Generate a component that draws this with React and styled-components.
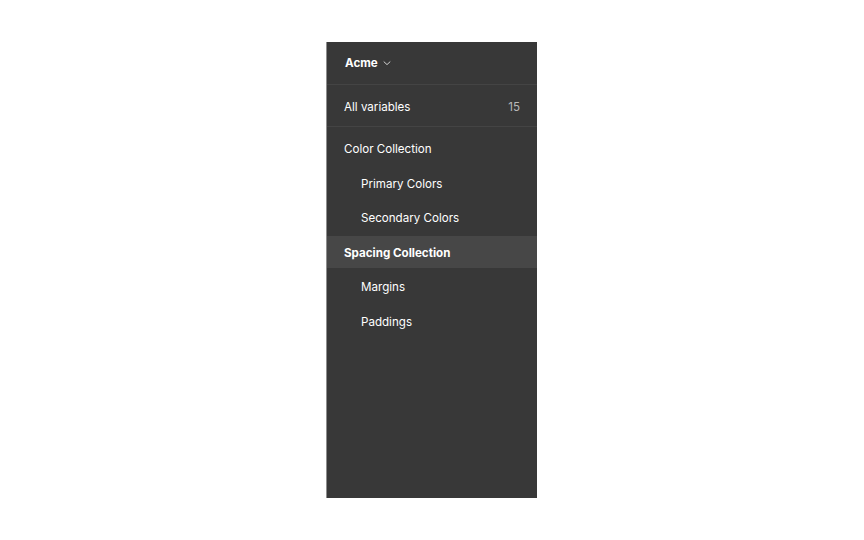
import React from 'react';
import styled, { createGlobalStyle } from 'styled-components';

const GlobalStyle = createGlobalStyle`
  *, *::before, *::after {
    box-sizing: border-box;
  }
  html, body {
    margin: 0;
    padding: 0;
    background: #ffffff;
  }
  body {
    font-family: Inter, "Noto Sans", "Liberation Sans", sans-serif;
    -webkit-font-smoothing: antialiased;
  }
`;

const Page = styled.div`
  width: 864px;
  height: 540px;
  padding: 42px 0 0 326px;
`;

const Panel = styled.nav`
  width: 211px;
  height: 456px;
  background: #383838;
  border-left: 1px solid #8e8e8e;
  display: flex;
  flex-direction: column;
  color: #ffffff;
  font-size: 11.6px;
`;

const Header = styled.div`
  height: 43px;
  display: flex;
  align-items: center;
  gap: 4px;
  padding: 0 18px;
  border-bottom: 1px solid #444444;
  font-weight: 700;
`;

const AllRow = styled.div`
  height: 42px;
  display: flex;
  align-items: center;
  justify-content: space-between;
  padding: 2px 17px 0;
  border-bottom: 1px solid #444444;
`;

const Count = styled.span`
  color: #b8b8b8;
`;

const List = styled.div`
  display: flex;
  flex-direction: column;
  gap: 2.5px;
  padding-top: 5px;
`;

const Item = styled.div`
  height: 32px;
  display: flex;
  align-items: center;
  padding: 2px 0 0 ${p => (p.$child ? 34 : 17)}px;
  font-weight: ${p => (p.$active ? 700 : 400)};
  background: ${p => (p.$active ? '#474747' : 'transparent')};
`;

const Chevron = () => (
  <svg width="10" height="10" viewBox="0 0 10 10" fill="none">
    <path d="M2 3.8 L5 6.6 L8 3.8" stroke="#d0d0d0" strokeWidth="1" strokeLinecap="round" strokeLinejoin="round" />
  </svg>
);

const items = [
  { label: 'Color Collection' },
  { label: 'Primary Colors', child: true },
  { label: 'Secondary Colors', child: true },
  { label: 'Spacing Collection', active: true },
  { label: 'Margins', child: true },
  { label: 'Paddings', child: true },
];

export default function App() {
  return (
    <>
      <GlobalStyle />
      <Page>
        <Panel>
          <Header>
            Acme <Chevron />
          </Header>
          <AllRow>
            <span>All variables</span>
            <Count>15</Count>
          </AllRow>
          <List>
            {items.map(it => (
              <Item key={it.label} $child={it.child} $active={it.active}>
                {it.label}
              </Item>
            ))}
          </List>
        </Panel>
      </Page>
    </>
  );
}
